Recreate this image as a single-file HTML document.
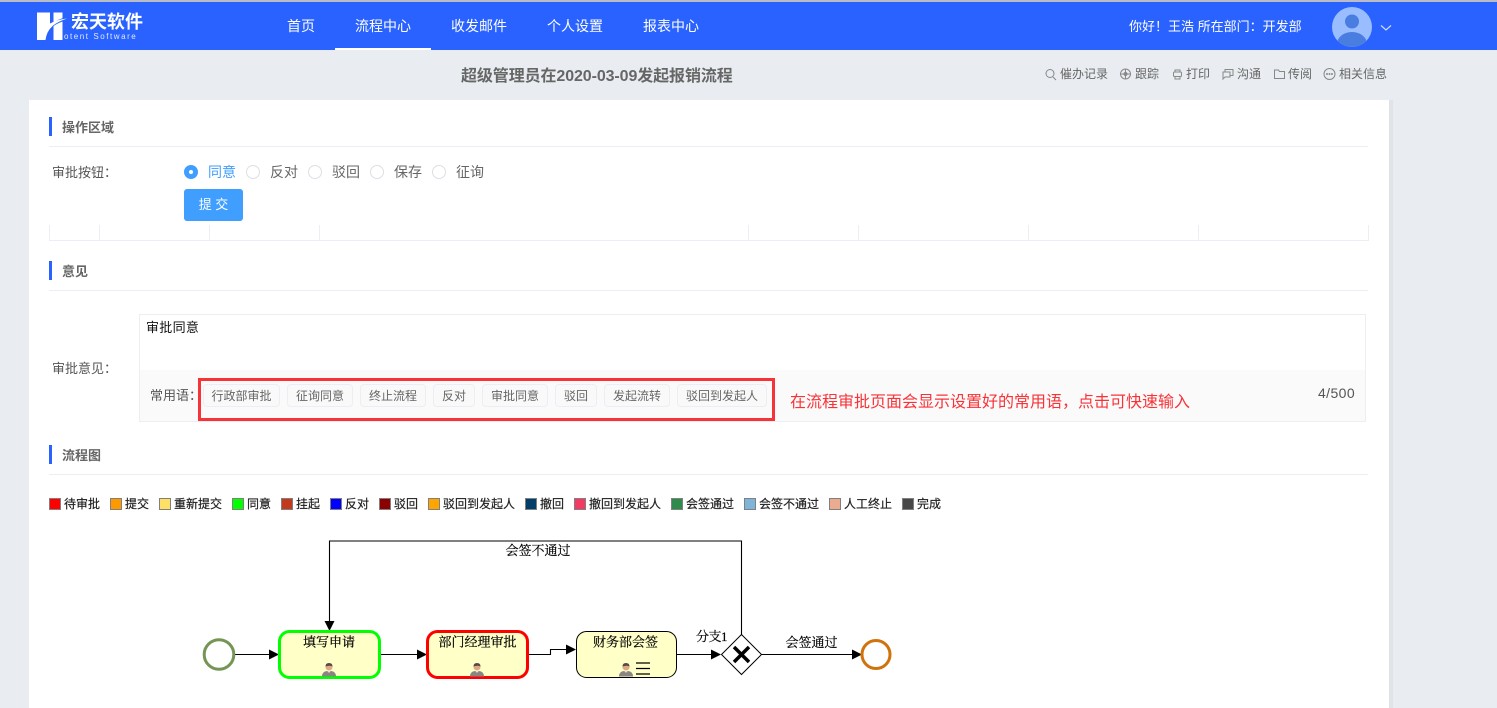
<!DOCTYPE html>
<html lang="zh-CN">
<head>
<meta charset="utf-8">
<title>超级管理员在2020-03-09发起报销流程</title>
<style>
html,body{margin:0;padding:0;width:1497px;height:708px;overflow:hidden;background:#e9edf1;}
body{position:relative;font-family:"Liberation Sans","Noto Sans CJK SC",sans-serif;}
.a{position:absolute;white-space:nowrap;line-height:1;}
.box{position:absolute;box-sizing:border-box;}
.nav{color:#fff;font-size:14px;top:19px;}
.tb{color:#666;font-size:12px;top:68px;}
.bar{position:absolute;left:49px;width:3px;height:19px;background:#2962ff;}
.hr{position:absolute;left:49px;width:1319px;height:1px;background:#ebeef5;}
.st{color:#666;font-size:13px;font-weight:700;left:62px;}
.radio{position:absolute;top:165px;width:14px;height:14px;box-sizing:border-box;border:1px solid #dcdfe6;border-radius:50%;background:#fff;}
.rt{top:165px;font-size:14px;color:#666;}
.v{position:absolute;top:225px;width:1px;height:15px;background:#ebeef5;}
.tag{position:absolute;top:384px;height:23px;box-sizing:border-box;border:1px solid #ebeef5;border-radius:4px;background:#f9f9fa;color:#666;font-size:12px;line-height:23px;text-align:center;white-space:nowrap;}
.sw{position:absolute;top:498px;width:12px;height:12px;box-sizing:border-box;border:1px solid #808080;}
.lt{top:498px;font-size:12px;color:#222;-webkit-text-stroke:.2px #222;}
</style>
</head>
<body>
<div class="box" style="left:0;top:0;width:1497px;height:2px;background:#b9bcc4;"></div>
<div class="box" style="left:0;top:2px;width:1497px;height:48px;background:#2962ff;"></div>
<div class="box" style="left:335px;top:48px;width:96px;height:2px;background:#fff;"></div>

<svg class="box" style="left:30px;top:8px;" width="40" height="36" viewBox="0 0 40 36">
<path d="M23.500 4.500H32.500V32H23.500Z" fill="#fff"/>
<path d="M22 17.500Q26 13.500 37 10.500" fill="none" stroke="#2962ff" stroke-width="3.200"/>
<path d="M7 4.500H20V15.500Q27 11.500 37 10.500Q28 13.500 22.500 18Q16.500 23.500 15.500 32H7Z" fill="#fff"/>
</svg>
<div class="a" style="left:71px;top:13px;font-size:18px;font-weight:700;color:#fff;">宏天软件</div>
<div class="a" style="left:64px;top:33px;font-size:8px;letter-spacing:1.55px;color:#e3eaff;">otent Software</div>

<div class="a nav" style="left:287px;">首页</div>
<div class="a nav" style="left:355px;">流程中心</div>
<div class="a nav" style="left:451px;">收发邮件</div>
<div class="a nav" style="left:547px;">个人设置</div>
<div class="a nav" style="left:643px;">报表中心</div>

<div class="a" style="left:1129px;top:20px;font-size:13px;color:#fff;">你好！王浩 所在部门：开发部</div>
<svg class="box" style="left:1332px;top:7px;" width="40" height="40" viewBox="0 0 40 40">
<defs><clipPath id="c"><circle cx="20" cy="20" r="20"/></clipPath></defs>
<circle cx="20" cy="20" r="20" fill="#9abdff"/>
<g clip-path="url(#c)"><circle cx="20" cy="14.500" r="7" fill="#4a7de0"/><ellipse cx="20" cy="37" rx="15" ry="12" fill="#4a7de0"/></g>
</svg>
<svg class="box" style="left:1380px;top:24px;" width="12" height="8" viewBox="0 0 12 8"><path d="M1 1.500L6 6L11 1.500" fill="none" stroke="#cfdcff" stroke-width="1.200"/></svg>

<div class="a" style="left:461px;top:69px;font-size:16px;font-weight:700;color:#666;letter-spacing:-.1px;">超级管理员在2020-03-09发起报销流程</div>

<svg class="box" style="left:1040px;top:64px;" width="300" height="20" viewBox="0 0 300 20" fill="none" stroke="#888" stroke-width="1">
<circle cx="10" cy="9.500" r="4"/><path d="M13 13L16 16"/>
<circle cx="85.500" cy="10" r="5"/><circle cx="85.500" cy="10" r="1.500" fill="#888"/><path d="M80 10H91M85.500 5V15"/>
<rect x="133.500" y="8" width="8" height="4.500" rx="1"/><path d="M135 8V6H140V8M135 12V15H140V12"/>
<rect x="185" y="5.500" width="8" height="6"/><path d="M183 8H190V13H185L183 15Z" fill="#e9edf1"/>
<path d="M234.500 6H238.500L239.500 7.500H244.500V14.500H234.500Z"/>
<circle cx="289.500" cy="10" r="5.500"/><circle cx="287" cy="10" r=".5"/><circle cx="289.500" cy="10" r=".5"/><circle cx="292" cy="10" r=".5"/>
</svg>
<div class="a tb" style="left:1060px;">催办记录</div>
<div class="a tb" style="left:1135px;">跟踪</div>
<div class="a tb" style="left:1186px;">打印</div>
<div class="a tb" style="left:1237px;">沟通</div>
<div class="a tb" style="left:1288px;">传阅</div>
<div class="a tb" style="left:1339px;">相关信息</div>

<div class="box" style="left:1389px;top:100px;width:4px;height:608px;background:#e0e3e8;"></div>
<div class="box" style="left:29px;top:100px;width:1360px;height:608px;background:#fff;"></div>

<div class="bar" style="top:117px;"></div>
<div class="a st" style="top:121px;">操作区域</div>
<div class="hr" style="top:146px;"></div>

<div class="a" style="left:52px;top:166px;font-size:13px;color:#555;">审批按钮：</div>
<div class="radio" style="left:184px;background:#409eff;border-color:#409eff;"></div>
<div class="box" style="left:189px;top:170px;width:4px;height:4px;border-radius:50%;background:#fff;"></div>
<div class="a rt" style="left:208px;color:#409eff;">同意</div>
<div class="radio" style="left:246px;"></div><div class="a rt" style="left:270px;">反对</div>
<div class="radio" style="left:308px;"></div><div class="a rt" style="left:332px;">驳回</div>
<div class="radio" style="left:370px;"></div><div class="a rt" style="left:394px;">保存</div>
<div class="radio" style="left:432px;"></div><div class="a rt" style="left:456px;">征询</div>
<div class="box" style="left:184px;top:189px;width:59px;height:32px;background:#409eff;border-radius:3px;color:#fff;font-size:13px;line-height:32px;text-align:center;">提 交</div>

<div class="v" style="left:49px;"></div><div class="v" style="left:99px;"></div><div class="v" style="left:209px;"></div><div class="v" style="left:319px;"></div><div class="v" style="left:748px;"></div><div class="v" style="left:858px;"></div><div class="v" style="left:1028px;"></div><div class="v" style="left:1198px;"></div><div class="v" style="left:1368px;"></div>
<div class="hr" style="top:240px;width:1320px;"></div>

<div class="bar" style="top:261px;"></div>
<div class="a st" style="top:265px;">意见</div>
<div class="hr" style="top:290px;"></div>

<div class="a" style="left:52px;top:362px;font-size:13px;color:#555;">审批意见：</div>
<div class="box" style="left:139px;top:314px;width:1227px;height:108px;border:1px solid #ebeef5;background:#fff;"></div>
<div class="box" style="left:140px;top:370px;width:1225px;height:51px;background:#fafafa;"></div>
<div class="a" style="left:146px;top:321px;font-size:13px;color:#111;letter-spacing:.3px;">审批同意</div>
<div class="a" style="left:150px;top:389px;font-size:13px;color:#555;">常用语：</div>
<div class="box" style="left:198px;top:378px;width:577px;height:43px;border:3px solid #f83338;"></div>
<div class="tag" style="left:203px;width:77px;">行政部审批</div>
<div class="tag" style="left:287px;width:66px;">征询同意</div>
<div class="tag" style="left:360px;width:66px;">终止流程</div>
<div class="tag" style="left:433px;width:42px;">反对</div>
<div class="tag" style="left:482px;width:66px;">审批同意</div>
<div class="tag" style="left:555px;width:42px;">驳回</div>
<div class="tag" style="left:604px;width:66px;">发起流转</div>
<div class="tag" style="left:677px;width:90px;">驳回到发起人</div>
<div class="a" style="left:790px;top:395px;font-size:16px;color:#f83338;">在流程审批页面会显示设置好的常用语，点击可快速输入</div>
<div class="a" style="left:1318px;top:386px;font-size:14px;color:#555;letter-spacing:.4px;">4/500</div>

<div class="bar" style="top:445px;"></div>
<div class="a st" style="top:449px;">流程图</div>
<div class="hr" style="top:474px;"></div>

<div class="sw" style="left:49px;background:#ff0000;"></div><div class="a lt" style="left:64px;">待审批</div>
<div class="sw" style="left:110px;background:#ff9900;"></div><div class="a lt" style="left:125px;">提交</div>
<div class="sw" style="left:159px;background:#ffe066;"></div><div class="a lt" style="left:174px;">重新提交</div>
<div class="sw" style="left:232px;background:#00ff00;"></div><div class="a lt" style="left:247px;">同意</div>
<div class="sw" style="left:281px;background:#c23a1e;"></div><div class="a lt" style="left:296px;">挂起</div>
<div class="sw" style="left:330px;background:#0000ff;"></div><div class="a lt" style="left:345px;">反对</div>
<div class="sw" style="left:379px;background:#8b0000;"></div><div class="a lt" style="left:394px;">驳回</div>
<div class="sw" style="left:428px;background:#ffa500;"></div><div class="a lt" style="left:443px;">驳回到发起人</div>
<div class="sw" style="left:525px;background:#023e68;"></div><div class="a lt" style="left:540px;">撤回</div>
<div class="sw" style="left:574px;background:#f33a62;"></div><div class="a lt" style="left:589px;">撤回到发起人</div>
<div class="sw" style="left:671px;background:#2e8b4c;"></div><div class="a lt" style="left:686px;">会签通过</div>
<div class="sw" style="left:744px;background:#7fb5d8;"></div><div class="a lt" style="left:759px;">会签不通过</div>
<div class="sw" style="left:829px;background:#eaab90;"></div><div class="a lt" style="left:844px;">人工终止</div>
<div class="sw" style="left:902px;background:#484848;"></div><div class="a lt" style="left:917px;">完成</div>

<svg class="box" style="left:0;top:0;" width="1497" height="708" viewBox="0 0 1497 708">
<defs>
<g id="p">
<path d="M-7 7.500Q-7 2.500 -2 2L0 3L2 2Q7 2.500 7 7.500Z" fill="#8a8580"/>
<path d="M-1.500 2L0 4L1.500 2Z" fill="#f3e3d3"/>
<circle cx="0" cy="-2" r="3.500" fill="#e0a888"/>
<path d="M-3.500 -2.500Q-3.500 -6 0 -6Q3.500 -6 3.500 -2.500Q1 -4 -3.500 -2.500Z" fill="#5a4a42"/>
</g>
</defs>
<g fill="none" stroke="#000" stroke-width="1.100">
<path d="M235 654.500H270"/><path d="M381 654.500H418"/>
<path d="M528 654.500H550.500V649.500H567"/><path d="M677 654.500H712"/>
<path d="M741.500 635V541H329.500V622"/><path d="M761 654.500H853"/>
</g>
<g fill="#000">
<path d="M269 649.500V659.500L279 654.500Z"/>
<path d="M417 649.500V659.500L427 654.500Z"/>
<path d="M566 644.500V654.500L576 649.500Z"/>
<path d="M711 649.500V659.500L721 654.500Z"/>
<path d="M852 649.500V659.500L862 654.500Z"/>
<path d="M324.500 621H334.500L329.500 631Z"/>
</g>
<circle cx="219" cy="654.500" r="14.800" fill="#fff" stroke="#759555" stroke-width="3"/>
<circle cx="876" cy="654.500" r="14" fill="#fff" stroke="#d0730c" stroke-width="3"/>
<rect x="279.500" y="631.500" width="100" height="46" rx="10" fill="#ffffc8" stroke="#00ff00" stroke-width="3"/>
<rect x="427.500" y="631.500" width="100" height="46" rx="10" fill="#ffffc8" stroke="#ff0000" stroke-width="3"/>
<rect x="576.500" y="631.500" width="100" height="46" rx="10" fill="#ffffc8" stroke="#000" stroke-width="1"/>
<use href="#p" x="329" y="669"/><use href="#p" x="477" y="669"/><use href="#p" x="626" y="669"/>
<path d="M636 663H650M636 668.500H650M636 674H650" stroke="#000" stroke-width="1.200"/>
<path d="M741.500 634.500L761.500 654.500L741.500 674.500L721.500 654.500Z" fill="#fff" stroke="#000"/>
<path d="M734 647L749 662M749 647L734 662" stroke="#000" stroke-width="3.500"/>
<g font-family='"Liberation Serif","Noto Serif CJK SC",serif' font-size="13" fill="#000" stroke="#000" stroke-width=".2">
<text x="329" y="646.500" text-anchor="middle">填写申请</text>
<text x="477.500" y="646.500" text-anchor="middle">部门经理审批</text>
<text x="625.500" y="646.500" text-anchor="middle">财务部会签</text>
<text x="538" y="555" text-anchor="middle">会签不通过</text>
<text x="696" y="641" letter-spacing="-.5">分支1</text>
<text x="811.500" y="647" text-anchor="middle">会签通过</text>
</g>
</svg>
</body>
</html>
